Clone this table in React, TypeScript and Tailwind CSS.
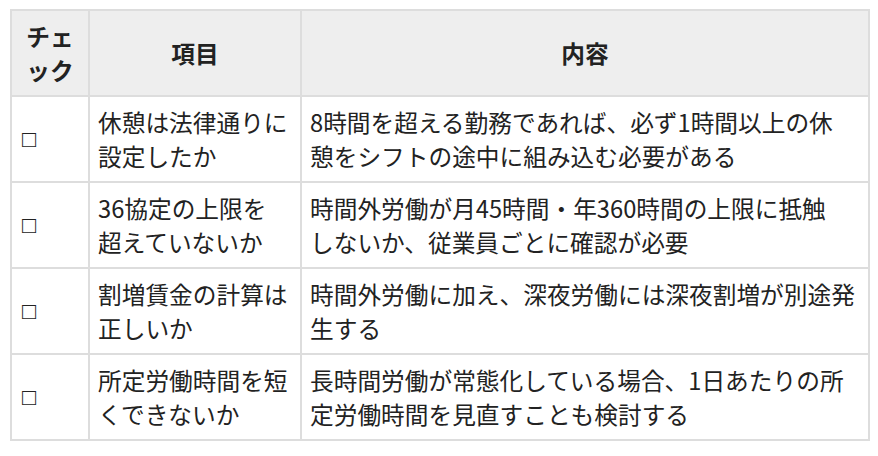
const rows = [
	{
		item: ['休憩は法律通りに', '設定したか'],
		detail: ['8時間を超える勤務であれば、必ず1時間以上の休', '憩をシフトの途中に組み込む必要がある'],
	},
	{
		item: ['36協定の上限を', '超えていないか'],
		detail: ['時間外労働が月45時間・年360時間の上限に抵触', 'しないか、従業員ごとに確認が必要'],
	},
	{
		item: ['割増賃金の計算は', '正しいか'],
		detail: ['時間外労働に加え、深夜労働には深夜割増が別途発', '生する'],
	},
	{
		item: ['所定労働時間を短', 'くできないか'],
		detail: ['長時間労働が常態化している場合、1日あたりの所', '定労働時間を見直すことも検討する'],
	},
];

function Lines({ lines }: { lines: string[] }) {
	return (
		<>
			{lines.map((line) => (
				<span key={line} className="block whitespace-nowrap">
					{line}
				</span>
			))}
		</>
	);
}

export default function App() {
	return (
		<div
			className="min-h-screen bg-white pl-[10px] pt-[9px] text-[#222] text-[23.7px] leading-[34px]"
			style={{ fontFamily: '"Noto Sans CJK JP", "Noto Sans", sans-serif' }}
		>
			<div className="grid w-[860px] grid-cols-[76px_210px_566px] gap-[2px] bg-[#dddddd] p-[2px]">
				{/* header */}
				<div className="flex h-[84px] flex-col items-center justify-center bg-[#eeeeee] p-2 text-center font-bold">
					<span className="block">チェ</span>
					<span className="block">ック</span>
				</div>
				<div className="flex h-[84px] items-center justify-center bg-[#eeeeee] p-2 font-bold">
					項目
				</div>
				<div className="flex h-[84px] items-center justify-center bg-[#eeeeee] p-2 font-bold">
					内容
				</div>

				{rows.map((row) => (
					<div key={row.item[0]} className="contents">
						<div className="flex h-[84px] items-center bg-white p-2">
							<span
								className="pl-[2px]"
								style={{ fontFamily: '"Liberation Sans", "DejaVu Sans", sans-serif' }}
							>
								□
							</span>
						</div>
						<div className="flex h-[84px] flex-col justify-center bg-white p-2">
							<Lines lines={row.item} />
						</div>
						<div className="flex h-[84px] flex-col justify-center bg-white p-2">
							<Lines lines={row.detail} />
						</div>
					</div>
				))}
			</div>
		</div>
	);
}
